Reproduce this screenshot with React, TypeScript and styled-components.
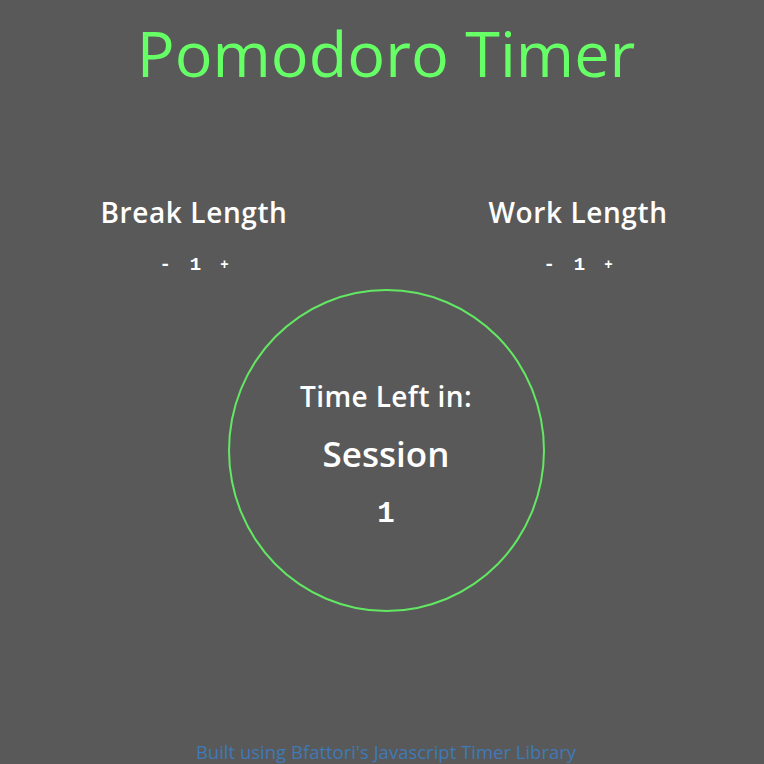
import React from "react";
import styled, { createGlobalStyle } from "styled-components";

const Global = createGlobalStyle`
  html, body { margin: 0; padding: 0; background: #595959; }
  body { font-family: "Open Sans", "Lato", sans-serif; color: #ffffff; }
`;

const Page = styled.div`
  width: 764px;
  height: 764px;
  box-sizing: border-box;
  padding-left: 8px;
  display: flex;
  flex-direction: column;
  align-items: center;
  overflow: hidden;
`;

const Title = styled.h1`
  margin: 13px 0 0;
  font-size: 63px;
  font-weight: 400;
  line-height: 80px;
  color: #66ff66;
`;

const Settings = styled.div`
  width: 100%;
  display: grid;
  grid-template-columns: 372px 372px;
  column-gap: 12px;
  margin-top: 102px;
`;

const Setting = styled.div`
  display: flex;
  flex-direction: column;
  align-items: center;
`;

const Label = styled.h2`
  margin: 0;
  font-size: 28px;
  font-weight: 600;
  letter-spacing: 0.6px;
  line-height: 34px;
`;

const Counter = styled.div`
  margin-top: 25px;
  display: flex;
  align-items: center;
  gap: 19px;
  font-family: "Liberation Mono", monospace;
  font-weight: 700;
  font-size: 19px;
  line-height: 22px;
`;

const Sym = styled.span<{ $small?: boolean }>`
  font-size: ${(p) => (p.$small ? "14px" : "19px")};
`;

const Circle = styled.div`
  margin-top: 13px;
  width: 317px;
  height: 323px;
  box-sizing: border-box;
  border: 2px solid #62e862;
  border-radius: 50%;
  display: flex;
  flex-direction: column;
  align-items: center;
  padding-top: 88px;
`;

const Status = styled.div`
  font-size: 28px;
  font-weight: 600;
  letter-spacing: 0.4px;
  line-height: 34px;
`;

const Mode = styled.div`
  margin-top: 20px;
  font-size: 35px;
  font-weight: 600;
  line-height: 42px;
`;

const Time = styled.div`
  margin-top: 24px;
  font-family: "Liberation Mono", monospace;
  font-weight: 700;
  font-size: 29px;
  line-height: 32px;
`;

const Footer = styled.div`
  margin-top: auto;
  margin-bottom: 0;
  font-size: 18.5px;
  line-height: 24px;
  color: #3f7ab6;
`;

export default function App() {
  return (
    <>
      <Global />
      <Page>
        <Title>Pomodoro Timer</Title>
        <Settings>
          <Setting>
            <Label>Break Length</Label>
            <Counter>
              <Sym>-</Sym>
              <span>1</span>
              <Sym $small>+</Sym>
            </Counter>
          </Setting>
          <Setting>
            <Label>Work Length</Label>
            <Counter>
              <Sym>-</Sym>
              <span>1</span>
              <Sym $small>+</Sym>
            </Counter>
          </Setting>
        </Settings>
        <Circle>
          <Status>Time Left in:</Status>
          <Mode>Session</Mode>
          <Time>1</Time>
        </Circle>
        <Footer>Built using Bfattori's Javascript Timer Library</Footer>
      </Page>
    </>
  );
}
